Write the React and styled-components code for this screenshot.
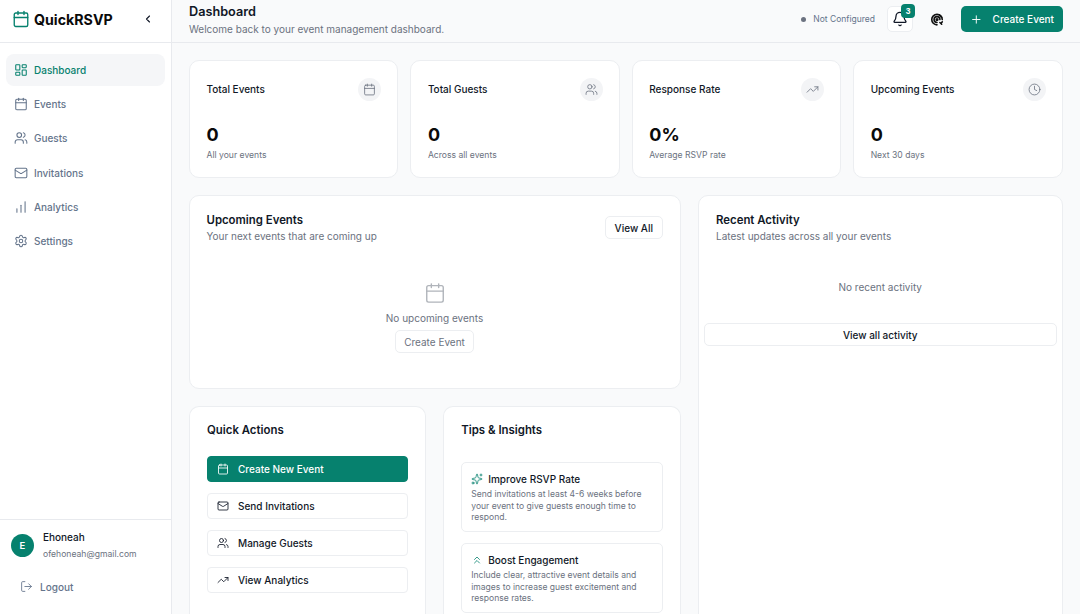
import React from "react"
import styled, { createGlobalStyle } from "styled-components"
import {
  Bell,
  Calendar,
  ChartNoAxesColumnIncreasing,
  ChevronLeft,
  ChevronsUp,
  Clock,
  LayoutDashboard,
  LogOut,
  Mail,
  Plus,
  Settings,
  Sparkles,
  TrendingUp,
  Users,
} from "lucide-react"

const GlobalStyle = createGlobalStyle`
  html, body {
    margin: 0;
    height: 100%;
    overflow: hidden;
    background: #f9fafb;
  }
  body {
    font-family: Inter, "Liberation Sans", sans-serif;
    color: #111827;
  }
  * {
    box-sizing: border-box;
  }
`

const Shell = styled.div`
  display: flex;
  width: 1080px;
  height: 614px;
  overflow: hidden;
`

const Sidebar = styled.aside`
  width: 172px;
  flex-shrink: 0;
  display: flex;
  flex-direction: column;
  background: #fff;
  border-right: 1px solid #e8eaee;
`

const Brand = styled.div`
  height: 43px;
  padding: 0 12px 4px;
  display: flex;
  align-items: center;
  border-bottom: 1px solid #e8eaee;
  color: #06816e;
`

const BrandName = styled.span`
  margin-left: 4px;
  font-size: 14.2px;
  font-weight: 700;
  color: #0a0a0a;
  flex: 1;
`

const Collapse = styled.span`
  display: flex;
  margin-right: 5px;
  color: #111827;
`

const Nav = styled.nav`
  flex: 1;
  padding: 11px 6px;
  display: flex;
  flex-direction: column;
  gap: 2.2px;
`

const NavItem = styled.a`
  height: 32px;
  padding: 0 8px;
  display: flex;
  align-items: center;
  gap: 6px;
  border-radius: 8px;
  font-size: 10px;
  font-weight: 500;
  color: ${({ $active }) => ($active ? "#06816e" : "#64748b")};
  background: ${({ $active }) => ($active ? "#f5f6f8" : "transparent")};
`

const UserBox = styled.div`
  border-top: 1px solid #e8eaee;
  height: 95px;
  padding: 10px 11px 0;
`

const UserRow = styled.div`
  display: flex;
  align-items: center;
  gap: 9px;
`

const Avatar = styled.div`
  width: 23px;
  height: 23px;
  border-radius: 50%;
  background: #06816e;
  color: #fff;
  font-size: 9.5px;
  font-weight: 600;
  display: flex;
  align-items: center;
  justify-content: center;
`

const UserName = styled.div`
  font-size: 10px;
  font-weight: 500;
  line-height: 14px;
`

const UserMail = styled.div`
  margin-top: 3px;
  font-size: 8.6px;
  line-height: 14px;
  color: #6b7280;
`

const Logout = styled.a`
  margin: 19px 0 0 9px;
  display: flex;
  align-items: center;
  gap: 7px;
  font-size: 10px;
  font-weight: 500;
  color: #64748b;
`

const Main = styled.main`
  flex: 1;
  min-width: 0;
  display: flex;
  flex-direction: column;
`

const Header = styled.header`
  height: 43px;
  flex-shrink: 0;
  padding: 0 17px 4px;
  display: flex;
  align-items: center;
  justify-content: space-between;
  border-bottom: 1px solid #e8eaee;
`

const PageTitle = styled.h1`
  margin: 0;
  font-size: 12.7px;
  line-height: 18px;
  font-weight: 600;
`

const PageSub = styled.p`
  margin: 1px 0 0;
  font-size: 10px;
  line-height: 14px;
  color: #6b7280;
`

const HeaderRight = styled.div`
  display: flex;
  align-items: center;
`

const Status = styled.span`
  display: flex;
  align-items: center;
  gap: 7px;
  font-size: 8.5px;
  color: #64748b;
  margin-right: 12px;
`

const Dot = styled.i`
  width: 5px;
  height: 5px;
  border-radius: 50%;
  background: #6b7280;
`

const BellButton = styled.button`
  position: relative;
  width: 26px;
  height: 26px;
  padding: 0;
  display: flex;
  align-items: center;
  justify-content: center;
  border: 1px solid #eceef1;
  border-radius: 5px;
  background: #fff;
  color: #111827;
`

const Badge = styled.span`
  position: absolute;
  top: -3px;
  right: -3px;
  width: 14px;
  height: 14px;
  border-radius: 4px;
  background: #06816e;
  color: #fff;
  font-size: 8.5px;
  font-weight: 600;
  display: flex;
  align-items: center;
  justify-content: center;
`

const ThemeIcon = styled.svg`
  display: block;
  margin: 0 17px;
`

const PrimaryButton = styled.button`
  width: 102px;
  height: 26px;
  border: 0;
  border-radius: 5px;
  background: #06816e;
  color: #fff;
  font: 500 10px Inter, "Liberation Sans", sans-serif;
  white-space: nowrap;
  display: flex;
  align-items: center;
  padding: 0 9px;
  gap: 10px;
`

const Content = styled.div`
  flex: 1;
  min-height: 0;
  padding: 17px 17.5px 0 17px;
  display: flex;
  flex-direction: column;
  gap: 17px;
`

const StatGrid = styled.div`
  display: grid;
  grid-template-columns: repeat(4, 1fr);
  gap: 12px;
`

const Card = styled.section`
  background: #fff;
  border: 1px solid #eceef1;
  border-radius: 10px;
`

const StatCard = styled(Card)`
  height: 118px;
  padding: 17px 16px 17px 16.5px;
`

const StatTop = styled.div`
  display: flex;
  align-items: center;
  justify-content: space-between;
`

const StatLabel = styled.span`
  margin-bottom: 2px;
  font-size: 10px;
  font-weight: 500;
`

const IconCircle = styled.span`
  width: 23px;
  height: 23px;
  border-radius: 50%;
  background: #f3f4f6;
  color: #6b7280;
  display: flex;
  align-items: center;
  justify-content: center;
`

const StatValue = styled.div`
  margin-top: 22px;
  font-size: 18px;
  line-height: 23px;
  font-weight: 700;
  color: #0a0a0a;
`

const StatNote = styled.div`
  margin-top: 2px;
  font-size: 8.6px;
  line-height: 14px;
  color: #6b7280;
`

const Lower = styled.div`
  display: grid;
  grid-template-columns: 491.5px 1fr;
  gap: 17.5px;
  flex: 1;
  min-height: 0;
`

const LeftColumn = styled.div`
  display: flex;
  flex-direction: column;
  gap: 17px;
`

const UpcomingCard = styled(Card)`
  height: 194px;
  padding: 16px 17px 16px 16.5px;
`

const CardHead = styled.div`
  display: flex;
  justify-content: space-between;
  align-items: flex-start;
`

const CardTitle = styled.h2`
  margin: 0;
  font-size: 11.4px;
  line-height: 16px;
  font-weight: 600;
`

const CardSub = styled.p`
  margin: 1px 0 0;
  font-size: 10px;
  line-height: 14px;
  color: #6b7280;
`

const OutlineButton = styled.button`
  border: 1px solid #eceef1;
  border-radius: 5px;
  background: #fff;
  color: ${({ $muted }) => ($muted ? "#6b7280" : "#111827")};
  font: ${({ $muted }) => ($muted ? 400 : 500)} 10px Inter, "Liberation Sans", sans-serif;
  height: 23px;
  padding: 0 8.5px;
`

const ViewAllButton = styled(OutlineButton)`
  margin-top: 4px;
`

const Empty = styled.div`
  margin-top: 39px;
  display: flex;
  flex-direction: column;
  align-items: center;
  color: #b0b4ba;
`

const EmptyText = styled.p`
  margin: 7px 0 5px;
  font-size: 10px;
  line-height: 14px;
  color: #6b7280;
`

const BottomRow = styled.div`
  flex: 1;
  display: grid;
  grid-template-columns: 1fr 1fr;
  gap: 17px;
`

const ActionsCard = styled(Card)`
  padding: 15px 17px;
  border-radius: 10px 10px 0 0;
  border-bottom: 0;
  height: 220px;
`

const ActionList = styled.div`
  margin-top: 18px;
  display: flex;
  flex-direction: column;
  gap: 11px;
`

const ActionButton = styled.a`
  height: 26px;
  padding: 0 9px;
  display: flex;
  align-items: center;
  gap: 9px;
  border-radius: 4px;
  border: 1px solid ${({ $primary }) => ($primary ? "#06816e" : "#eceef1")};
  background: ${({ $primary }) => ($primary ? "#06816e" : "#fff")};
  color: ${({ $primary }) => ($primary ? "#fff" : "#111827")};
  font-size: 10px;
  font-weight: 500;
`

const TipList = styled.div`
  margin-top: 24px;
  display: flex;
  flex-direction: column;
  gap: 11px;
`

const Tip = styled.div`
  height: 70px;
  padding: 9px 8px 9px 9px;
  border: 1px solid #eceef1;
  border-radius: 5px;
`

const TipTitle = styled.div`
  display: flex;
  align-items: center;
  gap: 5px;
  font-size: 10px;
  line-height: 14px;
  font-weight: 500;
  color: #06816e;
  span {
    color: #111827;
  }
`

const TipText = styled.p`
  margin: 3px 0 0;
  font-size: 8.55px;
  line-height: 11.5px;
  color: #6b7280;
`

const ActivityCard = styled(Card)`
  height: 430px;
  padding: 16px 5px;
  display: flex;
  flex-direction: column;
`

const ActivityHead = styled.div`
  padding: 0 12px;
`

const ActivityEmpty = styled.p`
  margin: 37px 0 0;
  text-align: center;
  font-size: 10px;
  line-height: 14px;
  color: #6b7280;
`

const WideButton = styled(OutlineButton)`
  width: 100%;
  margin-top: 29px;
`

const navItems = [
  { label: "Dashboard", icon: LayoutDashboard, active: true },
  { label: "Events", icon: Calendar },
  { label: "Guests", icon: Users },
  { label: "Invitations", icon: Mail },
  { label: "Analytics", icon: ChartNoAxesColumnIncreasing },
  { label: "Settings", icon: Settings },
]

const stats = [
  { label: "Total Events", value: "0", note: "All your events", icon: Calendar },
  { label: "Total Guests", value: "0", note: "Across all events", icon: Users },
  { label: "Response Rate", value: "0%", note: "Average RSVP rate", icon: TrendingUp },
  { label: "Upcoming Events", value: "0", note: "Next 30 days", icon: Clock },
]

const actions = [
  { label: "Create New Event", icon: Calendar, primary: true },
  { label: "Send Invitations", icon: Mail },
  { label: "Manage Guests", icon: Users },
  { label: "View Analytics", icon: TrendingUp },
]

const App = () => (
  <Shell>
    <GlobalStyle />
    <Sidebar>
      <Brand>
        <Calendar size={18} strokeWidth={1.8} />
        <BrandName>QuickRSVP</BrandName>
        <Collapse>
          <ChevronLeft size={12} strokeWidth={2.2} />
        </Collapse>
      </Brand>
      <Nav>
        {navItems.map(({ label, icon: Icon, active }) => (
          <NavItem key={label} $active={active}>
            <Icon size={14} strokeWidth={1.8} />
            {label}
          </NavItem>
        ))}
      </Nav>
      <UserBox>
        <UserRow>
          <Avatar>E</Avatar>
          <div>
            <UserName>Ehoneah</UserName>
            <UserMail>ofehoneah@gmail.com</UserMail>
          </div>
        </UserRow>
        <Logout>
          <LogOut size={13} strokeWidth={1.6} />
          Logout
        </Logout>
      </UserBox>
    </Sidebar>
    <Main>
      <Header>
        <div>
          <PageTitle>Dashboard</PageTitle>
          <PageSub>Welcome back to your event management dashboard.</PageSub>
        </div>
        <HeaderRight>
          <Status>
            <Dot />
            Not Configured
          </Status>
          <BellButton>
            <Bell size={16} strokeWidth={1.9} />
            <Badge>3</Badge>
          </BellButton>
          <ThemeIcon width="14" height="14" viewBox="0 0 24 24" fill="none" stroke="#111" strokeWidth="2.8" strokeLinecap="round">
            <path d="M21 13a9 9 0 1 0-9 9" />
            <path d="M17 13a5 5 0 1 0-5 5" />
            <circle cx="12" cy="13" r="1.4" />
            <path d="M16 5l4 4M17 18l3 3M21 17l-1 1" />
          </ThemeIcon>
          <PrimaryButton>
            <Plus size={13} strokeWidth={1.8} />
            Create Event
          </PrimaryButton>
        </HeaderRight>
      </Header>
      <Content>
        <StatGrid>
          {stats.map(({ label, value, note, icon: Icon }) => (
            <StatCard key={label}>
              <StatTop>
                <StatLabel>{label}</StatLabel>
                <IconCircle>
                  <Icon size={13} strokeWidth={1.5} />
                </IconCircle>
              </StatTop>
              <StatValue>{value}</StatValue>
              <StatNote>{note}</StatNote>
            </StatCard>
          ))}
        </StatGrid>
        <Lower>
          <LeftColumn>
            <UpcomingCard>
              <CardHead>
                <div>
                  <CardTitle>Upcoming Events</CardTitle>
                  <CardSub>Your next events that are coming up</CardSub>
                </div>
                <ViewAllButton>View All</ViewAllButton>
              </CardHead>
              <Empty>
                <Calendar size={22} strokeWidth={1.5} />
                <EmptyText>No upcoming events</EmptyText>
                <OutlineButton $muted>Create Event</OutlineButton>
              </Empty>
            </UpcomingCard>
            <BottomRow>
              <ActionsCard>
                <CardTitle>Quick Actions</CardTitle>
                <ActionList>
                  {actions.map(({ label, icon: Icon, primary }) => (
                    <ActionButton key={label} $primary={primary}>
                      <Icon size={12} strokeWidth={1.7} />
                      {label}
                    </ActionButton>
                  ))}
                </ActionList>
              </ActionsCard>
              <ActionsCard>
                <CardTitle>Tips &amp; Insights</CardTitle>
                <TipList>
                  <Tip>
                    <TipTitle>
                      <Sparkles size={12} strokeWidth={1.6} />
                      <span>Improve RSVP Rate</span>
                    </TipTitle>
                    <TipText>Send invitations at least 4-6 weeks before your event to give guests enough time to respond.</TipText>
                  </Tip>
                  <Tip>
                    <TipTitle>
                      <ChevronsUp size={12} strokeWidth={1.6} />
                      <span>Boost Engagement</span>
                    </TipTitle>
                    <TipText>Include clear, attractive event details and images to increase guest excitement and response rates.</TipText>
                  </Tip>
                </TipList>
              </ActionsCard>
            </BottomRow>
          </LeftColumn>
          <ActivityCard>
            <ActivityHead>
              <CardTitle>Recent Activity</CardTitle>
              <CardSub>Latest updates across all your events</CardSub>
            </ActivityHead>
            <ActivityEmpty>No recent activity</ActivityEmpty>
            <WideButton>View all activity</WideButton>
          </ActivityCard>
        </Lower>
      </Content>
    </Main>
  </Shell>
)

export default App
